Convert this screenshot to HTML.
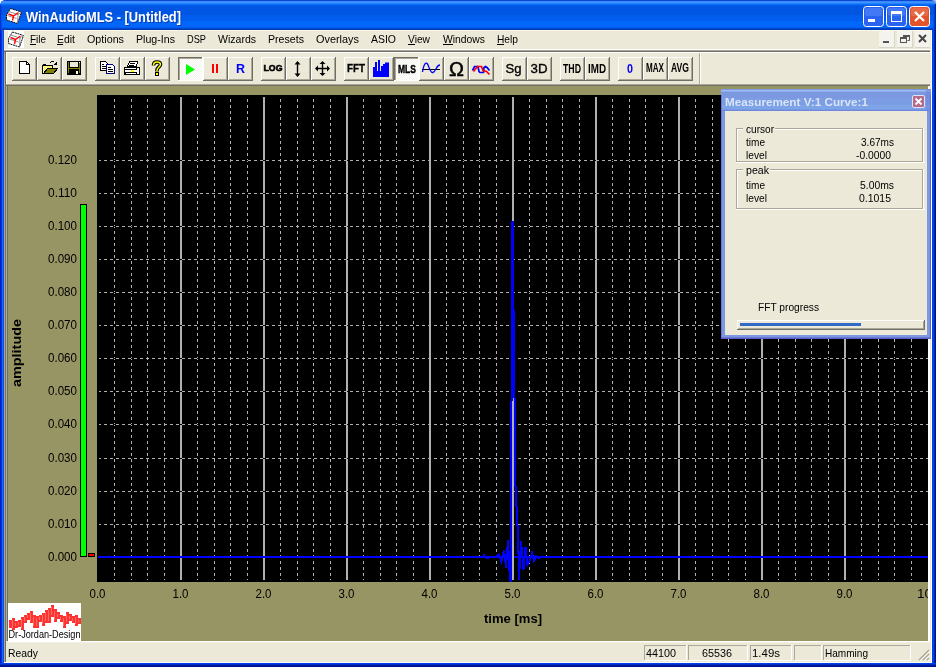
<!DOCTYPE html>
<html><head><meta charset="utf-8"><title>WinAudioMLS</title>
<style>html,body{margin:0;padding:0;background:#fff;overflow:hidden}svg{display:block;will-change:transform}</style></head>
<body><svg width="936" height="667" viewBox="0 0 936 667">
<rect x="0" y="0" width="936" height="8" fill="#fff"/><rect x="930" y="0" width="6" height="6" fill="#a8b8e8"/><path d="M0,6 Q0,0 6,0 H930 Q936,0 936,6 V667 H0 Z" fill="#0054e3"/>
<clipPath id="tc"><path d="M0,6 Q0,0 6,0 H930 Q936,0 936,6 V30 H0 Z"/></clipPath><g clip-path="url(#tc)">
<rect x="0" y="0" width="936" height="1" fill="#0a48d8" />
<rect x="0" y="1" width="936" height="1" fill="#3a88f8" />
<rect x="0" y="2" width="936" height="1" fill="#3d95ff" />
<rect x="0" y="3" width="936" height="1" fill="#2480ff" />
<rect x="0" y="4" width="936" height="1" fill="#0b6cf8" />
<rect x="0" y="5" width="936" height="1" fill="#005fea" />
<rect x="0" y="6" width="936" height="1" fill="#0056e3" />
<rect x="0" y="7" width="936" height="1" fill="#0056e3" />
<rect x="0" y="8" width="936" height="1" fill="#0056e3" />
<rect x="0" y="9" width="936" height="1" fill="#0056e3" />
<rect x="0" y="10" width="936" height="1" fill="#0056e3" />
<rect x="0" y="11" width="936" height="1" fill="#0056e3" />
<rect x="0" y="12" width="936" height="1" fill="#0056e3" />
<rect x="0" y="13" width="936" height="1" fill="#0056e3" />
<rect x="0" y="14" width="936" height="1" fill="#0056e3" />
<rect x="0" y="15" width="936" height="1" fill="#005ded" />
<rect x="0" y="16" width="936" height="1" fill="#005ded" />
<rect x="0" y="17" width="936" height="1" fill="#005ded" />
<rect x="0" y="18" width="936" height="1" fill="#005ded" />
<rect x="0" y="19" width="936" height="1" fill="#005ded" />
<rect x="0" y="20" width="936" height="1" fill="#005ded" />
<rect x="0" y="21" width="936" height="1" fill="#0067fb" />
<rect x="0" y="22" width="936" height="1" fill="#0067fb" />
<rect x="0" y="23" width="936" height="1" fill="#0067fb" />
<rect x="0" y="24" width="936" height="1" fill="#0067fb" />
<rect x="0" y="25" width="936" height="1" fill="#0067fb" />
<rect x="0" y="26" width="936" height="1" fill="#0067fb" />
<rect x="0" y="27" width="936" height="1" fill="#005eee" />
<rect x="0" y="28" width="936" height="1" fill="#0046cf" />
<rect x="0" y="29" width="936" height="1" fill="#003bb3" />
</g>
<rect x="0" y="30" width="1" height="637" fill="#0019cf" />
<rect x="1" y="30" width="1" height="637" fill="#0831d9" />
<rect x="2" y="30" width="1" height="637" fill="#166aee" />
<rect x="3" y="30" width="1" height="637" fill="#0054e3" />
<rect x="0" y="5" width="1" height="25" fill="#0028d0" opacity="0.8"/>
<rect x="1" y="5" width="1" height="25" fill="#0a48e0" opacity="0.8"/>
<rect x="932" y="30" width="1" height="637" fill="#0041f0" />
<rect x="933" y="30" width="1" height="637" fill="#0048e0" />
<rect x="934" y="30" width="1" height="637" fill="#0028a8" />
<rect x="935" y="30" width="1" height="637" fill="#00138c" />
<rect x="933" y="6" width="1" height="24" fill="#0050e8" opacity="0.85"/>
<rect x="934" y="5" width="1" height="25" fill="#0038c0" opacity="0.85"/>
<rect x="935" y="4" width="1" height="26" fill="#0020a0" opacity="0.85"/>
<rect x="0" y="663" width="936" height="1" fill="#0040f0" />
<rect x="0" y="664" width="936" height="1" fill="#0030c0" />
<rect x="0" y="665" width="936" height="1" fill="#0018a0" />
<rect x="0" y="666" width="936" height="1" fill="#001090" />
<rect x="4" y="30" width="928" height="633" fill="#ece9d8" />
<g transform="translate(6,8)"><path d="M4.5,0.5 L15.5,4 L11.5,15.5 L0.5,12 L0.5,7 Z" fill="#fff" stroke="#111" stroke-width="1" stroke-dasharray="2,0.6"/>
<path d="M2.5,3.5 L12,6.5 L15.5,4 M12,6.5 L11.5,15.5 M1.5,7.5 L10.5,10.5" stroke="#777" stroke-width="0.8" fill="none"/>
<path d="M2.5,6 L7.5,8 L12.5,4.5 M7.5,8 L6.5,12.5" stroke="#f00" stroke-width="1.4" fill="none"/></g>
<text x="27" y="23" font-family="Liberation Sans" font-size="14" fill="#0a3cb0" font-weight="bold" text-anchor="start" textLength="155" lengthAdjust="spacingAndGlyphs" >WinAudioMLS - [Untitled]</text>
<text x="26" y="22" font-family="Liberation Sans" font-size="14" fill="#fff" font-weight="bold" text-anchor="start" textLength="155" lengthAdjust="spacingAndGlyphs" >WinAudioMLS - [Untitled]</text>
<rect x="863.5" y="6.5" width="20" height="20" rx="3" fill="#2a63f0" stroke="#fff"/>
<rect x="865" y="8" width="17" height="8" rx="2" fill="#5a8cfa" opacity="0.5"/>
<rect x="868" y="19" width="7" height="3" fill="#fff" />
<rect x="886.5" y="6.5" width="20" height="20" rx="3" fill="#2a63f0" stroke="#fff"/>
<rect x="888" y="8" width="17" height="8" rx="2" fill="#5a8cfa" opacity="0.5"/>
<rect x="891.5" y="11.5" width="10" height="10" fill="none" stroke="#fff"/>
<rect x="891" y="11" width="11" height="3" fill="#fff" />
<rect x="909.5" y="6.5" width="20" height="20" rx="3" fill="#e2542c" stroke="#fff"/>
<rect x="911" y="8" width="17" height="8" rx="2" fill="#ee8060" opacity="0.5"/>
<path d="M915,12 L924,21 M924,12 L915,21" stroke="#fff" stroke-width="2.2"/>
<rect x="4" y="30" width="928" height="1" fill="#fbf8e8" />
<rect x="4" y="49" width="928" height="1" fill="#fff" />
<rect x="4" y="50" width="928" height="1" fill="#aca899" />
<rect x="4" y="51" width="928" height="1" fill="#716f64" />
<rect x="8" y="31" width="16" height="17" fill="#fff" />
<g transform="translate(8,31.5)"><path d="M4.5,0.5 L15.5,4 L11.5,15.5 L0.5,12 L0.5,7 Z" fill="#fff" stroke="#111" stroke-width="1" stroke-dasharray="2,0.6"/>
<path d="M2.5,3.5 L12,6.5 L15.5,4 M12,6.5 L11.5,15.5 M1.5,7.5 L10.5,10.5" stroke="#777" stroke-width="0.8" fill="none"/>
<path d="M2.5,6 L7.5,8 L12.5,4.5 M7.5,8 L6.5,12.5" stroke="#f00" stroke-width="1.4" fill="none"/></g>
<text x="30" y="43" font-family="Liberation Sans" font-size="11" fill="#000" font-weight="normal" text-anchor="start" textLength="16" lengthAdjust="spacingAndGlyphs" >File</text>
<text x="57" y="43" font-family="Liberation Sans" font-size="11" fill="#000" font-weight="normal" text-anchor="start" textLength="18" lengthAdjust="spacingAndGlyphs" >Edit</text>
<text x="87" y="43" font-family="Liberation Sans" font-size="11" fill="#000" font-weight="normal" text-anchor="start" textLength="37" lengthAdjust="spacingAndGlyphs" >Options</text>
<text x="136" y="43" font-family="Liberation Sans" font-size="11" fill="#000" font-weight="normal" text-anchor="start" textLength="39" lengthAdjust="spacingAndGlyphs" >Plug-Ins</text>
<text x="187" y="43" font-family="Liberation Sans" font-size="11" fill="#000" font-weight="normal" text-anchor="start" textLength="19" lengthAdjust="spacingAndGlyphs" >DSP</text>
<text x="218" y="43" font-family="Liberation Sans" font-size="11" fill="#000" font-weight="normal" text-anchor="start" textLength="38" lengthAdjust="spacingAndGlyphs" >Wizards</text>
<text x="268" y="43" font-family="Liberation Sans" font-size="11" fill="#000" font-weight="normal" text-anchor="start" textLength="36" lengthAdjust="spacingAndGlyphs" >Presets</text>
<text x="316" y="43" font-family="Liberation Sans" font-size="11" fill="#000" font-weight="normal" text-anchor="start" textLength="43" lengthAdjust="spacingAndGlyphs" >Overlays</text>
<text x="371" y="43" font-family="Liberation Sans" font-size="11" fill="#000" font-weight="normal" text-anchor="start" textLength="25" lengthAdjust="spacingAndGlyphs" >ASIO</text>
<text x="408" y="43" font-family="Liberation Sans" font-size="11" fill="#000" font-weight="normal" text-anchor="start" textLength="22" lengthAdjust="spacingAndGlyphs" >View</text>
<text x="443" y="43" font-family="Liberation Sans" font-size="11" fill="#000" font-weight="normal" text-anchor="start" textLength="42" lengthAdjust="spacingAndGlyphs" >Windows</text>
<text x="497" y="43" font-family="Liberation Sans" font-size="11" fill="#000" font-weight="normal" text-anchor="start" textLength="21" lengthAdjust="spacingAndGlyphs" >Help</text>
<rect x="30" y="44" width="6" height="1" fill="#000" />
<rect x="57" y="44" width="6" height="1" fill="#000" />
<rect x="408" y="44" width="7" height="1" fill="#000" />
<rect x="443" y="44" width="10" height="1" fill="#000" />
<rect x="497" y="44" width="7" height="1" fill="#000" />
<rect x="879" y="31" width="16" height="17" fill="#f4f3ee"/>
<rect x="879" y="47" width="16" height="1" fill="#d8d4c6" />
<rect x="894" y="31" width="1" height="17" fill="#d8d4c6" />
<rect x="883" y="41" width="6" height="2" fill="#555" />
<rect x="897" y="31" width="16" height="17" fill="#f4f3ee"/>
<rect x="897" y="47" width="16" height="1" fill="#d8d4c6" />
<rect x="912" y="31" width="1" height="17" fill="#d8d4c6" />
<path d="M903.5,35.5 h6 v5 h-2 M903.5,35.5 v2" stroke="#555" fill="none"/>
<rect x="900.5" y="37.5" width="6" height="5" fill="none" stroke="#555"/>
<rect x="900" y="37" width="7" height="2" fill="#555" />
<rect x="903" y="35" width="7" height="2" fill="#555" />
<rect x="915" y="31" width="16" height="17" fill="#f4f3ee"/>
<rect x="915" y="47" width="16" height="1" fill="#d8d4c6" />
<rect x="930" y="31" width="1" height="17" fill="#d8d4c6" />
<path d="M919,35 L926,42 M926,35 L919,42" stroke="#444" stroke-width="2"/>
<rect x="4" y="52" width="928" height="1" fill="#fff" />
<rect x="4" y="84" width="928" height="1" fill="#aca899" />
<rect x="4" y="85" width="928" height="1" fill="#716f64" />
<rect x="4" y="52" width="1" height="34" fill="#aca899" />
<rect x="5" y="52" width="1" height="34" fill="#716f64" />
<rect x="6" y="53" width="1" height="31" fill="#fff" />
<rect x="699" y="53" width="1" height="31" fill="#aca899" />
<rect x="700" y="53" width="1" height="31" fill="#fff" />
<pattern id="dith" width="2" height="2" patternUnits="userSpaceOnUse"><rect width="2" height="2" fill="#f4f3ee"/><rect width="1" height="1" fill="#fff"/><rect x="1" y="1" width="1" height="1" fill="#fff"/></pattern>
<rect x="12" y="57" width="25" height="1" fill="#fff" />
<rect x="12" y="57" width="1" height="24" fill="#fff" />
<rect x="12" y="80" width="25" height="1" fill="#716f64" />
<rect x="36" y="57" width="1" height="24" fill="#716f64" />
<rect x="13" y="79" width="23" height="1" fill="#aca899" />
<rect x="35" y="58" width="1" height="22" fill="#aca899" />
<rect x="37" y="57" width="25" height="1" fill="#fff" />
<rect x="37" y="57" width="1" height="24" fill="#fff" />
<rect x="37" y="80" width="25" height="1" fill="#716f64" />
<rect x="61" y="57" width="1" height="24" fill="#716f64" />
<rect x="38" y="79" width="23" height="1" fill="#aca899" />
<rect x="60" y="58" width="1" height="22" fill="#aca899" />
<rect x="62" y="57" width="25" height="1" fill="#fff" />
<rect x="62" y="57" width="1" height="24" fill="#fff" />
<rect x="62" y="80" width="25" height="1" fill="#716f64" />
<rect x="86" y="57" width="1" height="24" fill="#716f64" />
<rect x="63" y="79" width="23" height="1" fill="#aca899" />
<rect x="85" y="58" width="1" height="22" fill="#aca899" />
<rect x="95" y="57" width="25" height="1" fill="#fff" />
<rect x="95" y="57" width="1" height="24" fill="#fff" />
<rect x="95" y="80" width="25" height="1" fill="#716f64" />
<rect x="119" y="57" width="1" height="24" fill="#716f64" />
<rect x="96" y="79" width="23" height="1" fill="#aca899" />
<rect x="118" y="58" width="1" height="22" fill="#aca899" />
<rect x="120" y="57" width="25" height="1" fill="#fff" />
<rect x="120" y="57" width="1" height="24" fill="#fff" />
<rect x="120" y="80" width="25" height="1" fill="#716f64" />
<rect x="144" y="57" width="1" height="24" fill="#716f64" />
<rect x="121" y="79" width="23" height="1" fill="#aca899" />
<rect x="143" y="58" width="1" height="22" fill="#aca899" />
<rect x="145" y="57" width="25" height="1" fill="#fff" />
<rect x="145" y="57" width="1" height="24" fill="#fff" />
<rect x="145" y="80" width="25" height="1" fill="#716f64" />
<rect x="169" y="57" width="1" height="24" fill="#716f64" />
<rect x="146" y="79" width="23" height="1" fill="#aca899" />
<rect x="168" y="58" width="1" height="22" fill="#aca899" />
<rect x="178" y="57" width="25" height="24" fill="url(#dith)" />
<rect x="178" y="57" width="25" height="1" fill="#716f64" />
<rect x="178" y="57" width="1" height="24" fill="#716f64" />
<rect x="179" y="58" width="23" height="1" fill="#aca899" />
<rect x="179" y="58" width="1" height="22" fill="#aca899" />
<rect x="178" y="80" width="25" height="1" fill="#fff" />
<rect x="202" y="57" width="1" height="24" fill="#fff" />
<rect x="203" y="57" width="25" height="1" fill="#fff" />
<rect x="203" y="57" width="1" height="24" fill="#fff" />
<rect x="203" y="80" width="25" height="1" fill="#716f64" />
<rect x="227" y="57" width="1" height="24" fill="#716f64" />
<rect x="204" y="79" width="23" height="1" fill="#aca899" />
<rect x="226" y="58" width="1" height="22" fill="#aca899" />
<rect x="228" y="57" width="25" height="1" fill="#fff" />
<rect x="228" y="57" width="1" height="24" fill="#fff" />
<rect x="228" y="80" width="25" height="1" fill="#716f64" />
<rect x="252" y="57" width="1" height="24" fill="#716f64" />
<rect x="229" y="79" width="23" height="1" fill="#aca899" />
<rect x="251" y="58" width="1" height="22" fill="#aca899" />
<rect x="261" y="57" width="25" height="1" fill="#fff" />
<rect x="261" y="57" width="1" height="24" fill="#fff" />
<rect x="261" y="80" width="25" height="1" fill="#716f64" />
<rect x="285" y="57" width="1" height="24" fill="#716f64" />
<rect x="262" y="79" width="23" height="1" fill="#aca899" />
<rect x="284" y="58" width="1" height="22" fill="#aca899" />
<rect x="286" y="57" width="25" height="1" fill="#fff" />
<rect x="286" y="57" width="1" height="24" fill="#fff" />
<rect x="286" y="80" width="25" height="1" fill="#716f64" />
<rect x="310" y="57" width="1" height="24" fill="#716f64" />
<rect x="287" y="79" width="23" height="1" fill="#aca899" />
<rect x="309" y="58" width="1" height="22" fill="#aca899" />
<rect x="311" y="57" width="25" height="1" fill="#fff" />
<rect x="311" y="57" width="1" height="24" fill="#fff" />
<rect x="311" y="80" width="25" height="1" fill="#716f64" />
<rect x="335" y="57" width="1" height="24" fill="#716f64" />
<rect x="312" y="79" width="23" height="1" fill="#aca899" />
<rect x="334" y="58" width="1" height="22" fill="#aca899" />
<rect x="344" y="57" width="25" height="1" fill="#fff" />
<rect x="344" y="57" width="1" height="24" fill="#fff" />
<rect x="344" y="80" width="25" height="1" fill="#716f64" />
<rect x="368" y="57" width="1" height="24" fill="#716f64" />
<rect x="345" y="79" width="23" height="1" fill="#aca899" />
<rect x="367" y="58" width="1" height="22" fill="#aca899" />
<rect x="369" y="57" width="25" height="1" fill="#fff" />
<rect x="369" y="57" width="1" height="24" fill="#fff" />
<rect x="369" y="80" width="25" height="1" fill="#716f64" />
<rect x="393" y="57" width="1" height="24" fill="#716f64" />
<rect x="370" y="79" width="23" height="1" fill="#aca899" />
<rect x="392" y="58" width="1" height="22" fill="#aca899" />
<rect x="394" y="57" width="25" height="24" fill="url(#dith)" />
<rect x="394" y="57" width="25" height="1" fill="#716f64" />
<rect x="394" y="57" width="1" height="24" fill="#716f64" />
<rect x="395" y="58" width="23" height="1" fill="#aca899" />
<rect x="395" y="58" width="1" height="22" fill="#aca899" />
<rect x="394" y="80" width="25" height="1" fill="#fff" />
<rect x="418" y="57" width="1" height="24" fill="#fff" />
<rect x="419" y="57" width="25" height="1" fill="#fff" />
<rect x="419" y="57" width="1" height="24" fill="#fff" />
<rect x="419" y="80" width="25" height="1" fill="#716f64" />
<rect x="443" y="57" width="1" height="24" fill="#716f64" />
<rect x="420" y="79" width="23" height="1" fill="#aca899" />
<rect x="442" y="58" width="1" height="22" fill="#aca899" />
<rect x="444" y="57" width="25" height="1" fill="#fff" />
<rect x="444" y="57" width="1" height="24" fill="#fff" />
<rect x="444" y="80" width="25" height="1" fill="#716f64" />
<rect x="468" y="57" width="1" height="24" fill="#716f64" />
<rect x="445" y="79" width="23" height="1" fill="#aca899" />
<rect x="467" y="58" width="1" height="22" fill="#aca899" />
<rect x="469" y="57" width="25" height="1" fill="#fff" />
<rect x="469" y="57" width="1" height="24" fill="#fff" />
<rect x="469" y="80" width="25" height="1" fill="#716f64" />
<rect x="493" y="57" width="1" height="24" fill="#716f64" />
<rect x="470" y="79" width="23" height="1" fill="#aca899" />
<rect x="492" y="58" width="1" height="22" fill="#aca899" />
<rect x="502" y="57" width="25" height="1" fill="#fff" />
<rect x="502" y="57" width="1" height="24" fill="#fff" />
<rect x="502" y="80" width="25" height="1" fill="#716f64" />
<rect x="526" y="57" width="1" height="24" fill="#716f64" />
<rect x="503" y="79" width="23" height="1" fill="#aca899" />
<rect x="525" y="58" width="1" height="22" fill="#aca899" />
<rect x="527" y="57" width="25" height="1" fill="#fff" />
<rect x="527" y="57" width="1" height="24" fill="#fff" />
<rect x="527" y="80" width="25" height="1" fill="#716f64" />
<rect x="551" y="57" width="1" height="24" fill="#716f64" />
<rect x="528" y="79" width="23" height="1" fill="#aca899" />
<rect x="550" y="58" width="1" height="22" fill="#aca899" />
<rect x="560" y="57" width="25" height="1" fill="#fff" />
<rect x="560" y="57" width="1" height="24" fill="#fff" />
<rect x="560" y="80" width="25" height="1" fill="#716f64" />
<rect x="584" y="57" width="1" height="24" fill="#716f64" />
<rect x="561" y="79" width="23" height="1" fill="#aca899" />
<rect x="583" y="58" width="1" height="22" fill="#aca899" />
<rect x="585" y="57" width="25" height="1" fill="#fff" />
<rect x="585" y="57" width="1" height="24" fill="#fff" />
<rect x="585" y="80" width="25" height="1" fill="#716f64" />
<rect x="609" y="57" width="1" height="24" fill="#716f64" />
<rect x="586" y="79" width="23" height="1" fill="#aca899" />
<rect x="608" y="58" width="1" height="22" fill="#aca899" />
<rect x="618" y="57" width="25" height="1" fill="#fff" />
<rect x="618" y="57" width="1" height="24" fill="#fff" />
<rect x="618" y="80" width="25" height="1" fill="#716f64" />
<rect x="642" y="57" width="1" height="24" fill="#716f64" />
<rect x="619" y="79" width="23" height="1" fill="#aca899" />
<rect x="641" y="58" width="1" height="22" fill="#aca899" />
<rect x="643" y="57" width="25" height="1" fill="#fff" />
<rect x="643" y="57" width="1" height="24" fill="#fff" />
<rect x="643" y="80" width="25" height="1" fill="#716f64" />
<rect x="667" y="57" width="1" height="24" fill="#716f64" />
<rect x="644" y="79" width="23" height="1" fill="#aca899" />
<rect x="666" y="58" width="1" height="22" fill="#aca899" />
<rect x="668" y="57" width="25" height="1" fill="#fff" />
<rect x="668" y="57" width="1" height="24" fill="#fff" />
<rect x="668" y="80" width="25" height="1" fill="#716f64" />
<rect x="692" y="57" width="1" height="24" fill="#716f64" />
<rect x="669" y="79" width="23" height="1" fill="#aca899" />
<rect x="691" y="58" width="1" height="22" fill="#aca899" />
<g shape-rendering="crispEdges">
<path d="M19.5,61.5 H26.5 L29.5,64.5 V73.5 H19.5 Z" fill="#fff" stroke="#000"/>
<path d="M26.5,61.5 V64.5 H29.5" fill="none" stroke="#000"/>
<pattern id="ydith" width="2" height="2" patternUnits="userSpaceOnUse"><rect width="2" height="2" fill="#ff0"/><rect width="1" height="1" fill="#fff"/><rect x="1" y="1" width="1" height="1" fill="#fff"/></pattern>
<rect x="43" y="66" width="9" height="2" fill="url(#ydith)"/><path d="M43,66 H47 V68 L43,72 Z" fill="url(#ydith)"/>
<path d="M42.5,65 V73.5 H53 M42.5,65.5 H52.5 V68" stroke="#000" fill="none"/><rect x="43" y="64" width="3" height="1" fill="#000"/>
<path d="M47.5,68.5 H57.5 L53.5,73.5 H43.5 Z" fill="#808000" stroke="#000"/>
<path d="M50.5,63 V62.5 L51.5,61.5 H53.5 L54.5,62.5" stroke="#000" fill="none"/><path d="M53.5,64.5 L57,61 V64.5 Z" fill="#000"/>
<rect x="67" y="61" width="14" height="14" fill="#000"/>
<rect x="68" y="62" width="1" height="11" fill="#808000"/><rect x="79" y="62" width="1" height="11" fill="#808000"/>
<rect x="70" y="62" width="8" height="5" fill="#ece9d8"/><rect x="69" y="68" width="10" height="1" fill="#808000"/>
<rect x="76" y="71" width="2" height="3" fill="#fff"/><rect x="79" y="62" width="1" height="1" fill="#fff"/>
<path d="M100.5,61.5 H105.5 L107.5,63.5 V70.5 H100.5 Z" fill="#fff" stroke="#000"/>
<rect x="102" y="64" width="2" height="1" fill="#000"/><rect x="102" y="66" width="4" height="1" fill="#000"/><rect x="102" y="68" width="4" height="1" fill="#000"/>
<path d="M106.5,64.5 H112.5 L114.5,66.5 V73.5 H106.5 Z" fill="#fff" stroke="#000080"/>
<rect x="108" y="67" width="3" height="1" fill="#000"/><rect x="108" y="69" width="5" height="1" fill="#000"/><rect x="108" y="71" width="5" height="1" fill="#000"/>
<path d="M129.5,61.5 H137.5 L136.5,66.5 H127.5 Z" fill="#fff" stroke="#000"/>
<rect x="130" y="63" width="5" height="1" fill="#000"/><rect x="129" y="65" width="5" height="1" fill="#000"/>
<rect x="124" y="67" width="16" height="8" rx="1" fill="#000"/>
<rect x="125" y="68" width="11" height="1" fill="#fff"/><rect x="125" y="70" width="12" height="2" fill="#fff"/><rect x="131" y="70" width="3" height="2" fill="#ff0"/><rect x="126" y="73" width="10" height="1" fill="#fff"/>
<rect x="137" y="68" width="2" height="6" fill="url(#dith)"/>
<path d="M153.5,65.5 C153.5,63 155,62 157,62 C159.5,62 160.5,63 160.5,64.5 C160.5,66.5 157,67.5 157,70 V71.5" stroke="#000" stroke-width="3.6" fill="none" shape-rendering="auto"/>
<path d="M153.5,65.5 C153.5,63 155,62 157,62 C159.5,62 160.5,63 160.5,64.5 C160.5,66.5 157,67.5 157,70 V71.5" stroke="#ff0" stroke-width="1.4" fill="none" shape-rendering="auto"/>
<rect x="155" y="72" width="4" height="4" fill="#000"/><rect x="156" y="73" width="2" height="2" fill="#ff0"/>
</g>
<path d="M186,64 L195,69.5 L186,75 Z" fill="#00ff00"/>
<rect x="212" y="64" width="2" height="9" fill="#f00" />
<rect x="216" y="64" width="2" height="9" fill="#f00" />
<text x="240.5" y="73" font-family="Liberation Sans" font-size="12" fill="#00f" font-weight="bold" text-anchor="middle" textLength="9" lengthAdjust="spacingAndGlyphs" >R</text>
<text x="273" y="70.8" font-family="Liberation Sans" font-size="9.5" fill="#000" font-weight="bold" text-anchor="middle" textLength="19" lengthAdjust="spacingAndGlyphs" stroke="#000" stroke-width="0.6">LOG</text>
<path d="M297.5,63 V75" stroke="#000" stroke-width="1.4"/><path d="M294.5,64.5 L297.5,61 L300.5,64.5 Z M294.5,73.5 L297.5,77 L300.5,73.5 Z" fill="#000"/>
<path d="M322.5,63 V75 M316,68.5 H329" stroke="#000" stroke-width="1.4"/>
<path d="M319.5,64 L322.5,61 L325.5,64 Z M319.5,73 L322.5,76 L325.5,73 Z M318,65.5 L315,68.5 L318,71.5 Z M327,65.5 L330,68.5 L327,71.5 Z" fill="#000"/>
<text x="356" y="72" font-family="Liberation Sans" font-size="11" fill="#000" font-weight="bold" text-anchor="middle" textLength="18" lengthAdjust="spacingAndGlyphs" stroke="#000" stroke-width="0.3">FFT</text>
<path d="M373,77 V67 H375 V62 H377 V77 Z M378,77 V60 H380 V77 Z M381,77 V66 H383 V64 H385 V62.5 H389 V77 Z" fill="#00f"/>
<rect x="373" y="71" width="16" height="6" fill="#00f"/>
<text x="407" y="73.3" font-family="Liberation Sans" font-size="11" fill="#000" font-weight="bold" text-anchor="middle" textLength="18" lengthAdjust="spacingAndGlyphs" stroke="#000" stroke-width="0.4">MLS</text>
<path d="M422,69.5 H440" stroke="#000" stroke-width="1"/>
<path d="M422.5,72 C424,63 426,62 427.5,64 C429,66 430,73 433,72.5 C436,72 436,65 440,65" fill="none" stroke="#00f" stroke-width="1.3"/>
<text x="456.5" y="75.8" font-family="Liberation Sans" font-size="21" fill="#000" font-weight="normal" text-anchor="middle" textLength="15" lengthAdjust="spacingAndGlyphs" stroke="#000" stroke-width="0.5">Ω</text>
<polyline points="472.5,70.5 474.5,66.5 478,66.5 479,71.5 480,72.5 483.5,72.5 484,67.5 485.5,66.5 487,67.5 489.5,70.5" fill="none" stroke="#00f" stroke-width="1.7"/>
<polyline points="473.5,71.5 477.5,66.5 481.5,66.5 483,70.5 486.5,71.5 489.5,74.5" fill="none" stroke="#f00" stroke-width="1.7"/>
<text x="513.5" y="72.5" font-family="Liberation Sans" font-size="13" fill="#000" font-weight="normal" text-anchor="middle" textLength="16" lengthAdjust="spacingAndGlyphs" stroke="#000" stroke-width="0.35">Sg</text>
<text x="539" y="72.5" font-family="Liberation Sans" font-size="13" fill="#000" font-weight="normal" text-anchor="middle" textLength="17" lengthAdjust="spacingAndGlyphs" stroke="#000" stroke-width="0.35">3D</text>
<text x="572" y="73" font-family="Liberation Sans" font-size="13" fill="#000" font-weight="bold" text-anchor="middle" textLength="18" lengthAdjust="spacingAndGlyphs" >THD</text>
<text x="597" y="73" font-family="Liberation Sans" font-size="13" fill="#000" font-weight="bold" text-anchor="middle" textLength="18" lengthAdjust="spacingAndGlyphs" >IMD</text>
<text x="630" y="72.7" font-family="Liberation Sans" font-size="13.5" fill="#00f" font-weight="bold" text-anchor="middle" textLength="6" lengthAdjust="spacingAndGlyphs" >0</text>
<text x="655" y="72" font-family="Liberation Sans" font-size="12" fill="#000" font-weight="bold" text-anchor="middle" textLength="18" lengthAdjust="spacingAndGlyphs" >MAX</text>
<text x="680" y="72" font-family="Liberation Sans" font-size="12" fill="#000" font-weight="bold" text-anchor="middle" textLength="18" lengthAdjust="spacingAndGlyphs" >AVG</text>
<rect x="8" y="86" width="920" height="555" fill="#979563" />
<rect x="4" y="86" width="1" height="577" fill="#aca899" />
<rect x="5" y="86" width="1" height="577" fill="#716f64" />
<rect x="6" y="86" width="1" height="555" fill="#aeaca0" />
<rect x="7" y="86" width="1" height="555" fill="#716f64" />
<rect x="928" y="86" width="1" height="555" fill="#fff" />
<rect x="929" y="86" width="1" height="555" fill="#fff" />
<rect x="930" y="30" width="1" height="633" fill="#ece9d8" />
<rect x="931" y="30" width="1" height="633" fill="#fff" />
<rect x="8" y="641" width="922" height="1" fill="#fff" />
<rect x="8" y="642" width="922" height="1" fill="#f1efe2" />
<rect x="4" y="662" width="928" height="1" fill="#fffff0" />
<rect x="97" y="95" width="831" height="487" fill="#000" />
<pattern id="vd" width="1" height="6" patternUnits="userSpaceOnUse" y="99"><rect width="1" height="3" fill="#b0b0b0"/></pattern>
<pattern id="hd" width="6" height="1" patternUnits="userSpaceOnUse" x="98"><rect width="6" height="1" fill="#000"/><rect width="3" height="1" fill="#b0b0b0"/></pattern>
<g shape-rendering="crispEdges"><rect x="114" y="99" width="1" height="481" fill="url(#vd)"/><rect x="131" y="99" width="1" height="481" fill="url(#vd)"/><rect x="147" y="99" width="1" height="481" fill="url(#vd)"/><rect x="164" y="99" width="1" height="481" fill="url(#vd)"/><rect x="197" y="99" width="1" height="481" fill="url(#vd)"/><rect x="214" y="99" width="1" height="481" fill="url(#vd)"/><rect x="230" y="99" width="1" height="481" fill="url(#vd)"/><rect x="247" y="99" width="1" height="481" fill="url(#vd)"/><rect x="280" y="99" width="1" height="481" fill="url(#vd)"/><rect x="297" y="99" width="1" height="481" fill="url(#vd)"/><rect x="313" y="99" width="1" height="481" fill="url(#vd)"/><rect x="330" y="99" width="1" height="481" fill="url(#vd)"/><rect x="363" y="99" width="1" height="481" fill="url(#vd)"/><rect x="380" y="99" width="1" height="481" fill="url(#vd)"/><rect x="396" y="99" width="1" height="481" fill="url(#vd)"/><rect x="413" y="99" width="1" height="481" fill="url(#vd)"/><rect x="446" y="99" width="1" height="481" fill="url(#vd)"/><rect x="463" y="99" width="1" height="481" fill="url(#vd)"/><rect x="479" y="99" width="1" height="481" fill="url(#vd)"/><rect x="496" y="99" width="1" height="481" fill="url(#vd)"/><rect x="529" y="99" width="1" height="481" fill="url(#vd)"/><rect x="546" y="99" width="1" height="481" fill="url(#vd)"/><rect x="562" y="99" width="1" height="481" fill="url(#vd)"/><rect x="579" y="99" width="1" height="481" fill="url(#vd)"/><rect x="612" y="99" width="1" height="481" fill="url(#vd)"/><rect x="629" y="99" width="1" height="481" fill="url(#vd)"/><rect x="645" y="99" width="1" height="481" fill="url(#vd)"/><rect x="662" y="99" width="1" height="481" fill="url(#vd)"/><rect x="695" y="99" width="1" height="481" fill="url(#vd)"/><rect x="712" y="99" width="1" height="481" fill="url(#vd)"/><rect x="728" y="99" width="1" height="481" fill="url(#vd)"/><rect x="745" y="99" width="1" height="481" fill="url(#vd)"/><rect x="778" y="99" width="1" height="481" fill="url(#vd)"/><rect x="795" y="99" width="1" height="481" fill="url(#vd)"/><rect x="811" y="99" width="1" height="481" fill="url(#vd)"/><rect x="828" y="99" width="1" height="481" fill="url(#vd)"/><rect x="861" y="99" width="1" height="481" fill="url(#vd)"/><rect x="878" y="99" width="1" height="481" fill="url(#vd)"/><rect x="894" y="99" width="1" height="481" fill="url(#vd)"/><rect x="911" y="99" width="1" height="481" fill="url(#vd)"/><rect x="180" y="97" width="2" height="483" fill="#b0b0b0"/><rect x="263" y="97" width="2" height="483" fill="#b0b0b0"/><rect x="346" y="97" width="2" height="483" fill="#b0b0b0"/><rect x="429" y="97" width="2" height="483" fill="#b0b0b0"/><rect x="512" y="97" width="2" height="483" fill="#b0b0b0"/><rect x="595" y="97" width="2" height="483" fill="#b0b0b0"/><rect x="678" y="97" width="2" height="483" fill="#b0b0b0"/><rect x="761" y="97" width="2" height="483" fill="#b0b0b0"/><rect x="844" y="97" width="2" height="483" fill="#b0b0b0"/><rect x="99" y="557" width="829" height="1" fill="url(#hd)"/><rect x="99" y="524" width="829" height="1" fill="url(#hd)"/><rect x="99" y="491" width="829" height="1" fill="url(#hd)"/><rect x="99" y="458" width="829" height="1" fill="url(#hd)"/><rect x="99" y="424" width="829" height="1" fill="url(#hd)"/><rect x="99" y="391" width="829" height="1" fill="url(#hd)"/><rect x="99" y="358" width="829" height="1" fill="url(#hd)"/><rect x="99" y="325" width="829" height="1" fill="url(#hd)"/><rect x="99" y="292" width="829" height="1" fill="url(#hd)"/><rect x="99" y="259" width="829" height="1" fill="url(#hd)"/><rect x="99" y="226" width="829" height="1" fill="url(#hd)"/><rect x="99" y="193" width="829" height="1" fill="url(#hd)"/><rect x="99" y="160" width="829" height="1" fill="url(#hd)"/></g>
<rect x="98" y="556" width="830" height="2" fill="#00f"/>
<g shape-rendering="crispEdges">
<rect x="510" y="401" width="2" height="181" fill="#00f" />
<rect x="511" y="398" width="2" height="3" fill="#00f" />
<rect x="511" y="221" width="3" height="177" fill="#00f" />
<rect x="514" y="310" width="1" height="88" fill="#00f" />
<rect x="514" y="398" width="2" height="89" fill="#00f" />
<rect x="515" y="486" width="2" height="21" fill="#00f" />
<rect x="516" y="506" width="2" height="20" fill="#00f" />
<rect x="517" y="525" width="2" height="29" fill="#00f" />
<rect x="518" y="553" width="2" height="27" fill="#00f" />
<rect x="513" y="398" width="1" height="182" fill="#b0b0b0" />
<rect x="512" y="401" width="1" height="179" fill="#b0b0b0" />
<polyline points="483,557 484,555 485,557 488,558 490,557 496,557 499,554.5 501.5,561.5 504,550 506,567.5 508,540.5 510,581" fill="none" stroke="#00f" stroke-width="2"/>
<polyline points="519,579 521,541.5 523.5,569.5 525.5,547 527.5,565 530,560 532,553 534,560.5 536,556 538,558.5 540,557" fill="none" stroke="#00f" stroke-width="2"/>
</g>
<rect x="80.5" y="204.5" width="6" height="352" fill="#00ff00" stroke="#000"/>
<rect x="88.5" y="553.5" width="6" height="3" fill="#f00" stroke="#000"/>
<text x="77" y="561" font-family="Liberation Sans" font-size="12" fill="#000" font-weight="normal" text-anchor="end" textLength="29" lengthAdjust="spacingAndGlyphs" >0.000</text>
<text x="77" y="528" font-family="Liberation Sans" font-size="12" fill="#000" font-weight="normal" text-anchor="end" textLength="29" lengthAdjust="spacingAndGlyphs" >0.010</text>
<text x="77" y="495" font-family="Liberation Sans" font-size="12" fill="#000" font-weight="normal" text-anchor="end" textLength="29" lengthAdjust="spacingAndGlyphs" >0.020</text>
<text x="77" y="462" font-family="Liberation Sans" font-size="12" fill="#000" font-weight="normal" text-anchor="end" textLength="29" lengthAdjust="spacingAndGlyphs" >0.030</text>
<text x="77" y="428" font-family="Liberation Sans" font-size="12" fill="#000" font-weight="normal" text-anchor="end" textLength="29" lengthAdjust="spacingAndGlyphs" >0.040</text>
<text x="77" y="395" font-family="Liberation Sans" font-size="12" fill="#000" font-weight="normal" text-anchor="end" textLength="29" lengthAdjust="spacingAndGlyphs" >0.050</text>
<text x="77" y="362" font-family="Liberation Sans" font-size="12" fill="#000" font-weight="normal" text-anchor="end" textLength="29" lengthAdjust="spacingAndGlyphs" >0.060</text>
<text x="77" y="329" font-family="Liberation Sans" font-size="12" fill="#000" font-weight="normal" text-anchor="end" textLength="29" lengthAdjust="spacingAndGlyphs" >0.070</text>
<text x="77" y="296" font-family="Liberation Sans" font-size="12" fill="#000" font-weight="normal" text-anchor="end" textLength="29" lengthAdjust="spacingAndGlyphs" >0.080</text>
<text x="77" y="263" font-family="Liberation Sans" font-size="12" fill="#000" font-weight="normal" text-anchor="end" textLength="29" lengthAdjust="spacingAndGlyphs" >0.090</text>
<text x="77" y="230" font-family="Liberation Sans" font-size="12" fill="#000" font-weight="normal" text-anchor="end" textLength="29" lengthAdjust="spacingAndGlyphs" >0.100</text>
<text x="77" y="197" font-family="Liberation Sans" font-size="12" fill="#000" font-weight="normal" text-anchor="end" textLength="29" lengthAdjust="spacingAndGlyphs" >0.110</text>
<text x="77" y="164" font-family="Liberation Sans" font-size="12" fill="#000" font-weight="normal" text-anchor="end" textLength="29" lengthAdjust="spacingAndGlyphs" >0.120</text>
<text x="97.5" y="598" font-family="Liberation Sans" font-size="12" fill="#000" font-weight="normal" text-anchor="middle" textLength="16" lengthAdjust="spacingAndGlyphs" >0.0</text>
<text x="180.5" y="598" font-family="Liberation Sans" font-size="12" fill="#000" font-weight="normal" text-anchor="middle" textLength="16" lengthAdjust="spacingAndGlyphs" >1.0</text>
<text x="263.5" y="598" font-family="Liberation Sans" font-size="12" fill="#000" font-weight="normal" text-anchor="middle" textLength="16" lengthAdjust="spacingAndGlyphs" >2.0</text>
<text x="346.5" y="598" font-family="Liberation Sans" font-size="12" fill="#000" font-weight="normal" text-anchor="middle" textLength="16" lengthAdjust="spacingAndGlyphs" >3.0</text>
<text x="429.5" y="598" font-family="Liberation Sans" font-size="12" fill="#000" font-weight="normal" text-anchor="middle" textLength="16" lengthAdjust="spacingAndGlyphs" >4.0</text>
<text x="512.5" y="598" font-family="Liberation Sans" font-size="12" fill="#000" font-weight="normal" text-anchor="middle" textLength="16" lengthAdjust="spacingAndGlyphs" >5.0</text>
<text x="595.5" y="598" font-family="Liberation Sans" font-size="12" fill="#000" font-weight="normal" text-anchor="middle" textLength="16" lengthAdjust="spacingAndGlyphs" >6.0</text>
<text x="678.5" y="598" font-family="Liberation Sans" font-size="12" fill="#000" font-weight="normal" text-anchor="middle" textLength="16" lengthAdjust="spacingAndGlyphs" >7.0</text>
<text x="761.5" y="598" font-family="Liberation Sans" font-size="12" fill="#000" font-weight="normal" text-anchor="middle" textLength="16" lengthAdjust="spacingAndGlyphs" >8.0</text>
<text x="844.5" y="598" font-family="Liberation Sans" font-size="12" fill="#000" font-weight="normal" text-anchor="middle" textLength="16" lengthAdjust="spacingAndGlyphs" >9.0</text>
<clipPath id="c10"><rect x="0" y="0" width="928" height="667"/></clipPath>
<text x="917" y="598" font-family="Liberation Sans" font-size="12" fill="#000" font-weight="normal" text-anchor="start" textLength="15" lengthAdjust="spacingAndGlyphs" clip-path="url(#c10)">10</text>
<text x="513" y="623" font-family="Liberation Sans" font-size="12" fill="#000" font-weight="bold" text-anchor="middle" textLength="58" lengthAdjust="spacingAndGlyphs" >time [ms]</text>
<text transform="translate(21,353) rotate(-90)" x="0" y="0" font-family="Liberation Sans" font-size="12" font-weight="bold" text-anchor="middle" textLength="68" lengthAdjust="spacingAndGlyphs">amplitude</text>
<rect x="8" y="603" width="73" height="38" fill="#fff" />
<g shape-rendering="crispEdges">
<rect x="9" y="620" width="3" height="8" fill="#ff3333" />
<rect x="12" y="618" width="3" height="12" fill="#ff3333" />
<rect x="15" y="621" width="3" height="7" fill="#ff3333" />
<rect x="18" y="620" width="3" height="7" fill="#ff3333" />
<rect x="21" y="617" width="3" height="13" fill="#ff3333" />
<rect x="24" y="615" width="3" height="8" fill="#ff3333" />
<rect x="27" y="613" width="3" height="7" fill="#ff3333" />
<rect x="30" y="611" width="3" height="12" fill="#ff3333" />
<rect x="33" y="615" width="3" height="13" fill="#ff3333" />
<rect x="36" y="616" width="3" height="12" fill="#ff3333" />
<rect x="39" y="615" width="3" height="7" fill="#ff3333" />
<rect x="42" y="613" width="3" height="13" fill="#ff3333" />
<rect x="45" y="610" width="3" height="13" fill="#ff3333" />
<rect x="48" y="608" width="3" height="15" fill="#ff3333" />
<rect x="51" y="605" width="3" height="12" fill="#ff3333" />
<rect x="54" y="609" width="3" height="13" fill="#ff3333" />
<rect x="57" y="612" width="3" height="7" fill="#ff3333" />
<rect x="60" y="615" width="3" height="7" fill="#ff3333" />
<rect x="63" y="616" width="3" height="12" fill="#ff3333" />
<rect x="66" y="612" width="3" height="12" fill="#ff3333" />
<rect x="69" y="614" width="3" height="7" fill="#ff3333" />
<rect x="72" y="616" width="3" height="7" fill="#ff3333" />
<rect x="75" y="615" width="3" height="11" fill="#ff3333" />
<rect x="78" y="618" width="3" height="6" fill="#ff3333" />
<rect x="12" y="620" width="1" height="8" fill="#ff7060" />
<rect x="15" y="623" width="1" height="3" fill="#ff7060" />
<rect x="18" y="622" width="1" height="3" fill="#ff7060" />
<rect x="21" y="619" width="1" height="9" fill="#ff7060" />
<rect x="24" y="617" width="1" height="4" fill="#ff7060" />
<rect x="27" y="615" width="1" height="3" fill="#ff7060" />
<rect x="30" y="613" width="1" height="8" fill="#ff7060" />
<rect x="33" y="617" width="1" height="9" fill="#ff7060" />
<rect x="36" y="618" width="1" height="8" fill="#ff7060" />
<rect x="39" y="617" width="1" height="3" fill="#ff7060" />
<rect x="42" y="615" width="1" height="9" fill="#ff7060" />
<rect x="45" y="612" width="1" height="9" fill="#ff7060" />
<rect x="48" y="610" width="1" height="11" fill="#ff7060" />
<rect x="51" y="607" width="1" height="8" fill="#ff7060" />
<rect x="54" y="611" width="1" height="9" fill="#ff7060" />
<rect x="57" y="614" width="1" height="3" fill="#ff7060" />
<rect x="60" y="617" width="1" height="3" fill="#ff7060" />
<rect x="63" y="618" width="1" height="8" fill="#ff7060" />
<rect x="66" y="614" width="1" height="8" fill="#ff7060" />
<rect x="69" y="616" width="1" height="3" fill="#ff7060" />
<rect x="72" y="618" width="1" height="3" fill="#ff7060" />
<rect x="75" y="617" width="1" height="7" fill="#ff7060" />
<rect x="78" y="620" width="1" height="2" fill="#ff7060" />
</g>
<text x="44.5" y="638" font-family="Liberation Sans" font-size="10" fill="#000" font-weight="normal" text-anchor="middle" textLength="72" lengthAdjust="spacingAndGlyphs" >Dr-Jordan-Design</text>
<text x="8" y="657" font-family="Liberation Sans" font-size="11" fill="#000" font-weight="normal" text-anchor="start" textLength="30" lengthAdjust="spacingAndGlyphs" >Ready</text>
<rect x="644" y="645" width="43" height="1" fill="#aca899" />
<rect x="644" y="645" width="1" height="16" fill="#aca899" />
<rect x="644" y="660" width="43" height="1" fill="#fff" />
<rect x="686" y="645" width="1" height="16" fill="#fff" />
<rect x="688" y="645" width="60" height="1" fill="#aca899" />
<rect x="688" y="645" width="1" height="16" fill="#aca899" />
<rect x="688" y="660" width="60" height="1" fill="#fff" />
<rect x="747" y="645" width="1" height="16" fill="#fff" />
<rect x="750" y="645" width="42" height="1" fill="#aca899" />
<rect x="750" y="645" width="1" height="16" fill="#aca899" />
<rect x="750" y="660" width="42" height="1" fill="#fff" />
<rect x="791" y="645" width="1" height="16" fill="#fff" />
<rect x="794" y="645" width="28" height="1" fill="#aca899" />
<rect x="794" y="645" width="1" height="16" fill="#aca899" />
<rect x="794" y="660" width="28" height="1" fill="#fff" />
<rect x="821" y="645" width="1" height="16" fill="#fff" />
<rect x="823" y="645" width="88" height="1" fill="#aca899" />
<rect x="823" y="645" width="1" height="16" fill="#aca899" />
<rect x="823" y="660" width="88" height="1" fill="#fff" />
<rect x="910" y="645" width="1" height="16" fill="#fff" />
<text x="646" y="657" font-family="Liberation Sans" font-size="11" fill="#000" font-weight="normal" text-anchor="start" textLength="30" lengthAdjust="spacingAndGlyphs" >44100</text>
<text x="717" y="657" font-family="Liberation Sans" font-size="11" fill="#000" font-weight="normal" text-anchor="middle" textLength="30" lengthAdjust="spacingAndGlyphs" >65536</text>
<text x="752" y="657" font-family="Liberation Sans" font-size="11" fill="#000" font-weight="normal" text-anchor="start" textLength="28" lengthAdjust="spacingAndGlyphs" >1.49s</text>
<text x="825" y="657" font-family="Liberation Sans" font-size="11" fill="#000" font-weight="normal" text-anchor="start" textLength="43" lengthAdjust="spacingAndGlyphs" >Hamming</text>
<path d="M919,660 L929,650" stroke="#aca899" stroke-width="1.5"/>
<path d="M920,661 L930,651" stroke="#fff" stroke-width="1"/>
<path d="M923,660 L929,654" stroke="#aca899" stroke-width="1.5"/>
<path d="M924,661 L930,655" stroke="#fff" stroke-width="1"/>
<path d="M927,660 L929,658" stroke="#aca899" stroke-width="1.5"/>
<path d="M928,661 L930,659" stroke="#fff" stroke-width="1"/>
<rect x="721" y="89" width="210" height="250" fill="#7b98e0" />
<rect x="721" y="89" width="210" height="1" fill="#7a9ae8" />
<rect x="721" y="90" width="210" height="1" fill="#a0bcf0" />
<rect x="721" y="91" width="210" height="1" fill="#8eacec" />
<rect x="721" y="92" width="210" height="1" fill="#7b98e0" />
<rect x="721" y="93" width="210" height="1" fill="#7b98e0" />
<rect x="721" y="94" width="210" height="1" fill="#7b98e0" />
<rect x="721" y="95" width="210" height="1" fill="#7b98e0" />
<rect x="721" y="96" width="210" height="1" fill="#7b98e0" />
<rect x="721" y="97" width="210" height="1" fill="#7b98e0" />
<rect x="721" y="98" width="210" height="1" fill="#7c9de3" />
<rect x="721" y="99" width="210" height="1" fill="#7c9de3" />
<rect x="721" y="100" width="210" height="1" fill="#7c9de3" />
<rect x="721" y="101" width="210" height="1" fill="#7c9de3" />
<rect x="721" y="102" width="210" height="1" fill="#7c9de3" />
<rect x="721" y="103" width="210" height="1" fill="#7c9de3" />
<rect x="721" y="104" width="210" height="1" fill="#7c9de3" />
<rect x="721" y="105" width="210" height="1" fill="#7ea4e8" />
<rect x="721" y="106" width="210" height="1" fill="#7ea4e8" />
<rect x="721" y="107" width="210" height="1" fill="#7ea4e8" />
<rect x="721" y="108" width="210" height="1" fill="#7ea4e8" />
<rect x="721" y="109" width="210" height="1" fill="#7a98e4" />
<rect x="721" y="110" width="210" height="1" fill="#6b88de" />
<rect x="725" y="111" width="202" height="224" fill="#ece9d8" />
<rect x="721" y="95" width="1" height="244" fill="#6c78e0" />
<rect x="930" y="95" width="1" height="244" fill="#5a66d0" />
<rect x="721" y="338" width="210" height="1" fill="#5a5ec8" />
<rect x="722" y="337" width="208" height="1" fill="#6a7ad8" />
<rect x="926" y="89" width="5" height="22" fill="#7080dc" opacity="0.5"/>
<text x="725" y="106" font-family="Liberation Sans" font-size="11" fill="#d8e4f8" font-weight="bold" text-anchor="start" textLength="143" lengthAdjust="spacingAndGlyphs" >Measurement V:1 Curve:1</text>
<rect x="912.5" y="95.5" width="12" height="12" rx="1.5" fill="#b46a88" stroke="#e0e4f8"/>
<path d="M915.5,98.5 L921.5,104.5 M921.5,98.5 L915.5,104.5" stroke="#fff" stroke-width="1.8"/>
<rect x="736" y="128" width="188" height="1" fill="#aca899" />
<rect x="737" y="129" width="187" height="1" fill="#fff" />
<rect x="736" y="128" width="1" height="35" fill="#aca899" />
<rect x="737" y="129" width="1" height="33" fill="#fff" />
<rect x="736" y="161" width="188" height="1" fill="#aca899" />
<rect x="736" y="162" width="189" height="1" fill="#fff" />
<rect x="922" y="128" width="1" height="34" fill="#aca899" />
<rect x="923" y="128" width="1" height="35" fill="#fff" />
<rect x="743" y="126" width="32" height="5" fill="#ece9d8" />
<rect x="736" y="169" width="188" height="1" fill="#aca899" />
<rect x="737" y="170" width="187" height="1" fill="#fff" />
<rect x="736" y="169" width="1" height="41" fill="#aca899" />
<rect x="737" y="170" width="1" height="39" fill="#fff" />
<rect x="736" y="208" width="188" height="1" fill="#aca899" />
<rect x="736" y="209" width="189" height="1" fill="#fff" />
<rect x="922" y="169" width="1" height="40" fill="#aca899" />
<rect x="923" y="169" width="1" height="41" fill="#fff" />
<rect x="743" y="167" width="27" height="5" fill="#ece9d8" />
<text x="746" y="133" font-family="Liberation Sans" font-size="11" fill="#000" font-weight="normal" text-anchor="start" textLength="28" lengthAdjust="spacingAndGlyphs" >cursor</text>
<text x="746" y="146" font-family="Liberation Sans" font-size="11" fill="#000" font-weight="normal" text-anchor="start" textLength="19" lengthAdjust="spacingAndGlyphs" >time</text>
<text x="746" y="159" font-family="Liberation Sans" font-size="11" fill="#000" font-weight="normal" text-anchor="start" textLength="21" lengthAdjust="spacingAndGlyphs" >level</text>
<text x="746" y="174" font-family="Liberation Sans" font-size="11" fill="#000" font-weight="normal" text-anchor="start" textLength="23" lengthAdjust="spacingAndGlyphs" >peak</text>
<text x="746" y="189" font-family="Liberation Sans" font-size="11" fill="#000" font-weight="normal" text-anchor="start" textLength="19" lengthAdjust="spacingAndGlyphs" >time</text>
<text x="746" y="202" font-family="Liberation Sans" font-size="11" fill="#000" font-weight="normal" text-anchor="start" textLength="21" lengthAdjust="spacingAndGlyphs" >level</text>
<text x="894" y="146" font-family="Liberation Sans" font-size="11" fill="#000" font-weight="normal" text-anchor="end" textLength="33" lengthAdjust="spacingAndGlyphs" >3.67ms</text>
<text x="891" y="159" font-family="Liberation Sans" font-size="11" fill="#000" font-weight="normal" text-anchor="end" textLength="35" lengthAdjust="spacingAndGlyphs" >-0.0000</text>
<text x="894" y="189" font-family="Liberation Sans" font-size="11" fill="#000" font-weight="normal" text-anchor="end" textLength="34" lengthAdjust="spacingAndGlyphs" >5.00ms</text>
<text x="891" y="202" font-family="Liberation Sans" font-size="11" fill="#000" font-weight="normal" text-anchor="end" textLength="32" lengthAdjust="spacingAndGlyphs" >0.1015</text>
<text x="758" y="311" font-family="Liberation Sans" font-size="11" fill="#000" font-weight="normal" text-anchor="start" textLength="61" lengthAdjust="spacingAndGlyphs" >FFT progress</text>
<rect x="737" y="320" width="188" height="10" fill="#ece9d8" />
<rect x="737" y="320" width="188" height="1" fill="#fff" />
<rect x="737" y="320" width="1" height="10" fill="#fff" />
<rect x="737" y="329" width="188" height="1" fill="#716f64" />
<rect x="924" y="320" width="1" height="10" fill="#716f64" />
<rect x="738" y="328" width="186" height="1" fill="#aca899" />
<rect x="923" y="321" width="1" height="8" fill="#aca899" />
<rect x="740" y="323" width="121" height="3" fill="#3169c6" />
</svg></body></html>
